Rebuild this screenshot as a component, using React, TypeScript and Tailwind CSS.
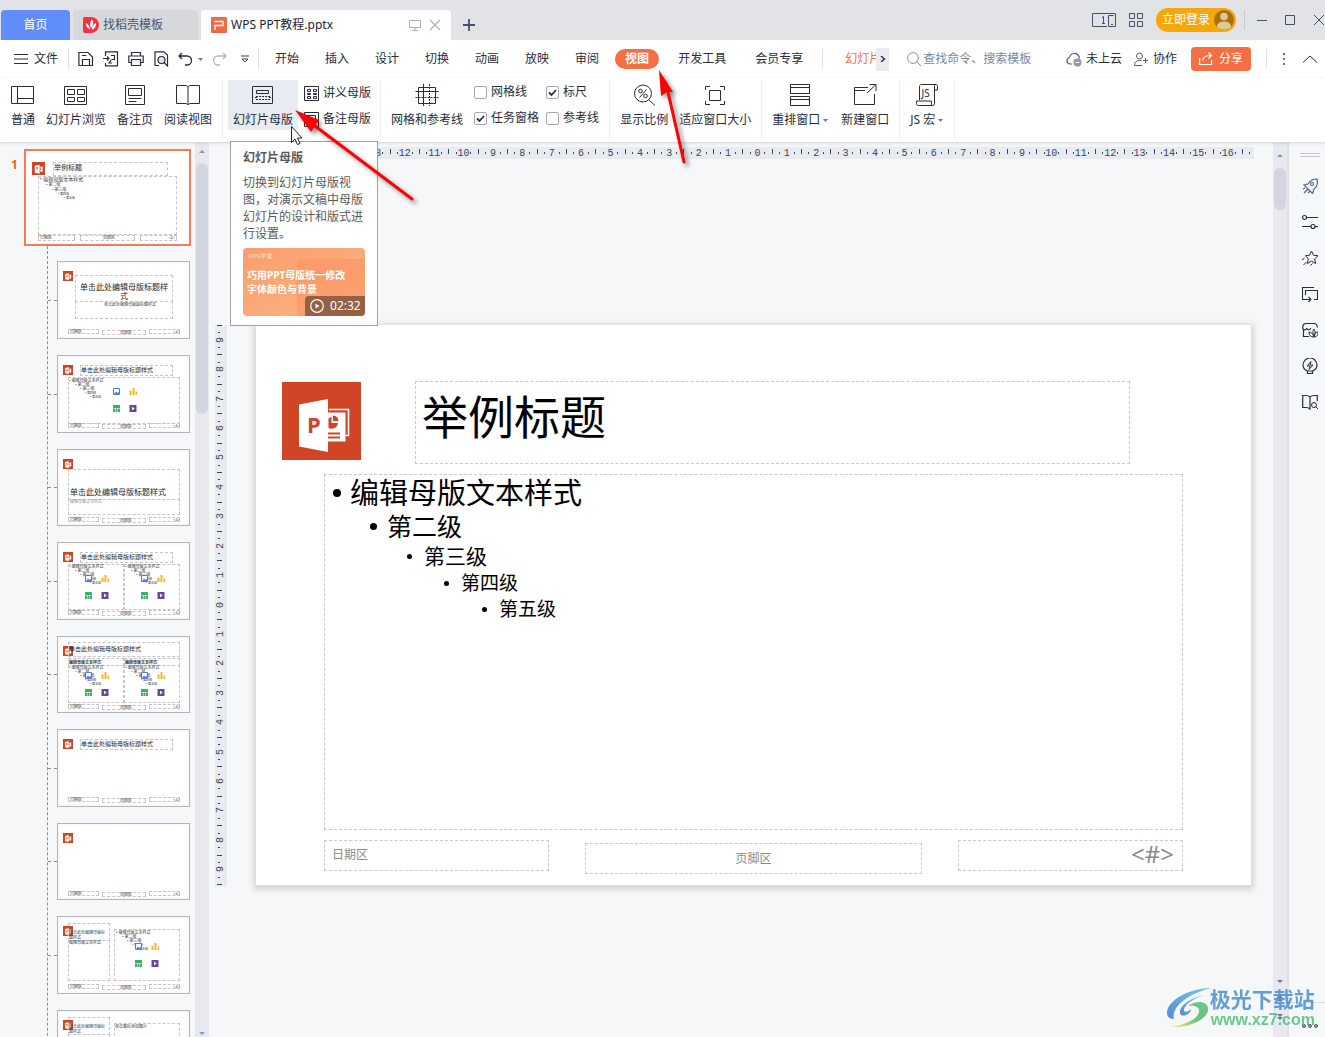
import React from "react";

type Kids = { children?: React.ReactNode };

/* ---------- icons ---------- */

function Ico({ children, size = 16, box = 16, className = "" }: Kids & { size?: number; box?: number; className?: string }) {
  return (
    <svg
      width={size}
      height={size}
      viewBox={`0 0 ${box} ${box}`}
      fill="none"
      stroke="currentColor"
      strokeWidth="1"
      className={`shrink-0 ${className}`}
      aria-hidden="true"
    >
      {children}
    </svg>
  );
}

const Caret = () => (
  <svg width="5" height="3" viewBox="0 0 5 3" className="shrink-0" aria-hidden="true">
    <path d="M0 0h5L2.5 3z" fill="#6b7a94" />
  </svg>
);

function OfficeLogo({ className = "" }: { className?: string }) {
  return (
    <svg viewBox="0 0 79 78" className={className} preserveAspectRatio="none" aria-hidden="true">
      <rect width="79" height="78" fill="#d04526" />
      <path d="M47 27.5H66.5V53.5H63.5" fill="none" stroke="#fff" strokeWidth="1.6" />
      <path d="M46 30.5H63.5V59.5H46z" fill="#fff" />
      <path d="M46.5 36.5a6 6 0 0 1 3-1.500V41h6.500a6.500 6.500 0 0 1-9.500 5z" fill="#d04526" />
      <path d="M51 33.500a6 6 0 0 1 5.500 5.500H51z" fill="#d04526" />
      <path d="M46 50.500h12v2H46zM46 54.500h12v2H46z" fill="#d04526" />
      <path d="M17 22.500 46 17v53L17 64.500z" fill="#fff" />
      <text x="25" y="51" fontFamily="Open Sans, Noto Sans, sans-serif" fontWeight="700" fontSize="22" fill="#d04526">
        P
      </text>
    </svg>
  );
}

/* ---------- title bar ---------- */

function TitleBar() {
  return (
    <header className="flex h-10 shrink-0 items-end bg-[#e2e3e7] text-[#44506a]">
      <nav className="flex h-[30px] items-stretch pl-px" aria-label="文档标签">
        <button className="w-[69px] rounded-t bg-[#608dfa] text-white">首页</button>
        <button className="ml-[3px] flex w-[125px] items-center rounded-t bg-[#d7d8dc] pl-[10px] text-[#4a566c]">
          <svg width="16" height="16" viewBox="0 0 16 16" aria-hidden="true">
            <path d="M0 2a2 2 0 0 1 2-2h6a8 8 0 1 1 0 16H2a2 2 0 0 1-2-2z" fill="#f7323d" />
            <path d="M9 2c2 3 1.500 6-1 9-1.500-3-1.200-6 1-9zM3 6c2 1 3.500 3 4 6-3-.6-4.200-3-4-6zM13 6c.4 3-1 6-4.500 6.500C9 9.500 10.500 7 13 6z" fill="#fff" />
          </svg>
          <span className="ml-1">找稻壳模板</span>
        </button>
        <div className="ml-[3px] flex w-[250px] items-center rounded-t bg-white pl-[10px] pr-[10px]">
          <svg width="16" height="16" viewBox="0 0 16 16" aria-hidden="true">
            <rect width="16" height="16" rx="1" fill="#ee6a41" />
            <path d="M4 13V8.500h8V4.500H3.500" fill="none" stroke="#fff" strokeWidth="1.300" />
          </svg>
          <span className="ml-1 text-[#1f2430]">WPS PPT教程.pptx</span>
          <Ico size={12} box={12} className="ml-auto text-[#a4b1c8]">
            <path d="M.5 1.500h11v7H.5zM6 8.500v3M3 11.500h6" />
          </Ico>
          <button aria-label="关闭标签" className="ml-2 text-[#a4b1c8]">
            <Ico size={12} box={12}>
              <path d="M1 1l10 10M11 1 1 11" strokeWidth="1.200" />
            </Ico>
          </button>
        </div>
        <button aria-label="新建标签" className="ml-3">
          <Ico size={12} box={12}>
            <path d="M6 0v12M0 6h12" strokeWidth="1.800" />
          </Ico>
        </button>
      </nav>
      <div className="ml-auto flex h-10 items-center">
        <button aria-label="窗口布局">
          <svg width="24" height="14" viewBox="0 0 24 14" fill="none" stroke="currentColor" aria-hidden="true">
            <path d="M15 13.500H.5V.5h23v13M10 4.500 11.500 3.500v7M10 10.500h3M23.500 13.500h-7v-11h5M19 11.500h2" />
          </svg>
        </button>
        <button aria-label="全部应用" className="ml-[13px]">
          <Ico size={14} box={14}>
            <path d="M.5.5h5v5h-5zM8.500.5h5v5h-5zM.5 8.500h5v5h-5zM8.500 8.500h5v5h-5z" />
          </Ico>
        </button>
        <button className="ml-[13px] flex h-6 w-20 items-center justify-between rounded-full bg-[#f5a80c] pl-[6px] pr-[2px] text-white">
          立即登录
          <svg width="20" height="20" viewBox="0 0 20 20" aria-hidden="true">
            <circle cx="10" cy="10" r="10" fill="#a97208" />
            <circle cx="10" cy="6.500" r="3.800" fill="#e0c79a" />
            <path d="M3 17c0-4 3-5.500 7-5.500s7 1.500 7 5.500a10 10 0 0 1-14 0z" fill="#e0c79a" />
          </svg>
        </button>
        <span className="ml-2 h-5 w-px bg-[#c8cad0]" />
        <button aria-label="最小化" className="ml-3">
          <Ico size={10} box={10}><path d="M0 5.500h10" /></Ico>
        </button>
        <button aria-label="最大化" className="ml-[18px]">
          <Ico size={10} box={10}><path d="M.5.5h9v9h-9z" /></Ico>
        </button>
        <button aria-label="关闭" className="ml-[18px]">
          <Ico size={12} box={12}><path d="M1 1l10 10M11 1 1 11" /></Ico>
        </button>
      </div>
    </header>
  );
}

/* ---------- menu row ---------- */

function PointerToView() {
  return (
    <svg width="100" height="130" viewBox="615 45 100 130" className="pointer-events-none absolute -top-1 left-0 z-40 drop-shadow-[3px_3px_2px_rgba(0,0,0,0.45)]" aria-hidden="true">
      <path d="M668 92 684 162" stroke="#fe0000" strokeWidth="3" strokeLinecap="round" />
      <path d="M659 70 673 92 667 92 661 96z" fill="#fe0000" />
    </svg>
  );
}

function MenuRow() {
  return (
    <div className="flex h-[38px] shrink-0 items-center bg-white text-[#262d3d]">
      <button className="flex items-center pl-[14px]">
        <Ico size={14} box={14}><path d="M0 2.500h14M0 7h14M0 11.500h14" /></Ico>
        <span className="ml-[6px]">文件</span>
      </button>
      <span className="ml-[10px] h-[22px] w-px bg-[#e0e2e8]" />
      <div className="ml-[9px] flex items-center gap-[9px]">
        <button aria-label="保存"><Ico><path d="M.9 1.500h9L14.500 6v8.500H.9zM4.500 14.500V8.500h7v6M4 4.500h4.500" strokeWidth="1.200" /></Ico></button>
        <button aria-label="输出为PDF"><Ico><path d="M2.500 5V.8h12v14h-12V12M0 7.500h6M4 5.500l2 2-2 2M8 4.500h3.500v4H9M8.500 8.500 6 12h3" strokeWidth="1.200" /></Ico></button>
        <button aria-label="打印"><Ico><path d="M3.500 5V1.500h9V5M3.500 11.500h-2.700V5h14.400v6.500h-2.700M3.500 8.500h9v6h-9z" strokeWidth="1.200" /></Ico></button>
        <button aria-label="打印预览"><Ico><path d="M6 14.500H2V.8h9L14.500 4v11M11 11.500l4 4" strokeWidth="1.200" /><circle cx="8.500" cy="9" r="3.500" fill="#dfe2e8" strokeWidth="1.200" /></Ico></button>
      </div>
      <button aria-label="撤销" className="ml-[9px]"><Ico size={14} box={14}><path d="M1 4h8a4.500 4.500 0 0 1 0 9H7M4 1 1 4l3 3" strokeWidth="1.300" /></Ico></button>
      <span className="ml-[6px]"><Caret /></span>
      <button aria-label="恢复" className="ml-[10px] text-[#b5b8bf]"><Ico size={14} box={14}><path d="M13 4H5a4.500 4.500 0 0 0 0 9h2M10 1l3 3-3 3" strokeWidth="1.300" /></Ico></button>
      <button aria-label="自定义快速访问" className="ml-[14px]"><Ico size={8} box={8}><path d="M0 1h8M1 4l3 3 3-3z" strokeWidth=".9" /></Ico></button>
      <span className="ml-[9px] h-[22px] w-px bg-[#e0e2e8]" />
      <nav className="ml-4 flex items-center" aria-label="功能区">
        <div className="flex items-center gap-[26px]">
          {["开始", "插入", "设计", "切换", "动画", "放映", "审阅"].map((t) => (
            <button key={t}>{t}</button>
          ))}
        </div>
        <div className="relative ml-4">
          <button className="block h-5 w-11 rounded-full bg-[#f66f43] font-bold text-white">视图</button>
          <PointerToView />
        </div>
        <button className="ml-[19px]">开发工具</button>
        <button className="ml-[29px]">会员专享</button>
        <span className="ml-[19px] h-5 w-px bg-[#e0e2e8]" />
        <button className="ml-[22px] w-[31px] overflow-hidden whitespace-nowrap text-left text-[#f66f43]">幻灯片</button>
        <button aria-label="更多选项卡" className="flex h-[23px] w-[13px] items-center justify-center bg-[#e8ebf0]">
          <Ico size={6} box={6}><path d="M1 0l3.500 3L1 6" strokeWidth="1.400" /></Ico>
        </button>
      </nav>
      <label className="ml-[18px] flex items-center text-[#8590a8]">
        <Ico size={14} box={14}><circle cx="6" cy="6" r="5.400" /><path d="M10 10l4 4" /></Ico>
        <input className="ml-[2px] w-[112px] bg-transparent text-xs outline-none placeholder:text-[#7c869c]" placeholder="查找命令、搜索模板" aria-label="查找命令" />
      </label>
      <div className="ml-auto flex items-center">
        <button className="flex items-center">
          <Ico className="text-[#55617a]"><path d="M6 13H4a3.300 3.300 0 0 1-.5-6.500A5 5 0 0 1 13 5.500l.5 2" strokeWidth="1.200" /><circle cx="11.500" cy="11.500" r="4" fill="#8f98ac" stroke="none" /><path d="M9.500 11.500h4" stroke="#fff" /></Ico>
          <span className="ml-1">未上云</span>
        </button>
        <button className="ml-3 flex items-center">
          <Ico size={14} box={14} className="text-[#55617a]"><circle cx="5.500" cy="4" r="3" /><path d="M8.500 13.500H.5c0-3.500 2-5 5-5h2M11.500 6v5M9 8.500h5" /></Ico>
          <span className="ml-[5px]">协作</span>
        </button>
        <button className="ml-[14px] flex h-6 w-[60px] items-center justify-center rounded bg-[#f66f43] text-white">
          <Ico size={14} box={14}><path d="M.6 6v6.500h12V8M3.500 8.500C4 5 7 3.500 12 3.500M9.500.5l3 3-3 3" strokeWidth="1.200" /></Ico>
          <span className="ml-[6px]">分享</span>
        </button>
        <span className="ml-[15px] h-5 w-px bg-[#e0e2e8]" />
        <button aria-label="更多" className="ml-4">
          <svg width="2" height="12" viewBox="0 0 2 12" aria-hidden="true"><path d="M0 0h2v2H0zM0 5h2v2H0zM0 10h2v2H0z" fill="#67728a" /></svg>
        </button>
        <button aria-label="收起功能区" className="ml-[18px] mr-2"><Ico size={14} box={14}><path d="M0 10.500 7 4l7 6.500" /></Ico></button>
      </div>
    </div>
  );
}

/* ---------- ribbon ---------- */

function Big({ label, caret, className = "", children }: Kids & { label: string; caret?: boolean; className?: string }) {
  return (
    <button className={`flex h-[50px] flex-col items-center pt-[3px] ${className}`}>
      <span className="flex h-6 items-center">
        <svg width="24" height="24" viewBox="0 0 24 24" fill="none" stroke="#262d3d" strokeWidth="1" aria-hidden="true">
          {children}
        </svg>
      </span>
      <span className="mt-[5px] flex items-center gap-[3px] whitespace-nowrap leading-4">
        {label}
        {caret && <Caret />}
      </span>
    </button>
  );
}

function Check({ label, on }: { label: string; on?: boolean }) {
  return (
    <label className="flex h-4 items-center gap-1 whitespace-nowrap">
      <span className="relative size-[13px]">
        <input type="checkbox" defaultChecked={on} className="peer absolute inset-0 size-[13px] appearance-none rounded-[2px] border border-[#a2a8b5] bg-white" />
        <svg viewBox="0 0 13 13" className="pointer-events-none absolute inset-0 hidden peer-checked:block" aria-hidden="true">
          <path d="M3 6.500 5.500 9 10 4" fill="none" stroke="#262d3d" strokeWidth="1.800" />
        </svg>
      </span>
      {label}
    </label>
  );
}

function Tip() {
  return (
    <div role="tooltip" className="absolute left-[2px] top-[61px] z-20 w-[148px] border border-[#a0a0a3] bg-white px-3 pb-[9px] pt-[7px] text-left text-[#5a5a5e]">
      <p className="font-bold leading-[17px]">幻灯片母版</p>
      <p className="mt-2 leading-[17px]">切换到幻灯片母版视图，对演示文稿中母版幻灯片的设计和版式进行设置。</p>
      <div className="relative mt-[6px] flex h-[68px] flex-col overflow-hidden rounded-sm bg-linear-to-br from-[#fa9f6b] to-[#fbb384] text-white">
        <span className="absolute left-[54px] top-[11px] h-[60px] w-[68px] rounded-tl bg-[#fb9462] opacity-60" />
        <span className="relative pl-[5px] pt-1 text-[6px] leading-2 opacity-60">WPS学堂</span>
        <span className="relative whitespace-nowrap pl-1 pt-2 text-[10px] font-bold leading-[14px]">
          巧用PPT母版统一修改
          <br />
          字体颜色与背景
        </span>
        <span className="absolute bottom-0 right-0 flex h-5 w-[60px] items-center gap-[6px] rounded-tl bg-[#966043] pl-[5px]">
          <svg width="14" height="14" viewBox="0 0 14 14" className="shrink-0" aria-hidden="true">
            <circle cx="7" cy="7" r="6.300" fill="none" stroke="#fff" strokeWidth="1.200" />
            <path d="M5.500 4.500v5L9.500 7z" fill="#fff" />
          </svg>
          02:32
        </span>
      </div>
    </div>
  );
}

function PointerToMaster() {
  return (
    <svg width="200" height="140" viewBox="228 80 200 140" className="pointer-events-none absolute left-0 top-0 z-40" aria-hidden="true">
      <path d="M291.500 126.500v16l3.500-3.500 2.500 5.500 2.500-1-2.500-5.500h4.500z" fill="#fff" stroke="#1f2430" />
      <g className="drop-shadow-[3px_3px_2px_rgba(0,0,0,0.45)]">
        <path d="M315 126 412 199" stroke="#fe0000" strokeWidth="3" strokeLinecap="round" />
        <path d="M295 110 319 120 315 126 311 132z" fill="#fe0000" />
      </g>
    </svg>
  );
}

const Sep = ({ className = "" }: { className?: string }) => <span className={`h-[60px] w-px shrink-0 bg-[#eceef2] ${className}`} />;

function Ribbon() {
  return (
    <div className="relative z-10 flex h-16 shrink-0 items-start bg-white pt-[2px] text-[#262d3d] shadow-[0_1px_3px_rgba(0,0,0,0.15)]">
      <div className="flex gap-[11px] pl-[11px]">
        <Big label="普通"><path d="M.5 3.500h22v17H.5zM6.500 3.500v17M6.500 15.500h16" /></Big>
        <Big label="幻灯片浏览"><path d="M.5 3.500h22v18H.5zM3.500 6.500h7v5h-7zM13.500 6.500h7v5h-7zM3.500 14.500h7v4h-7zM13.500 14.500h7v4h-7z" /></Big>
        <Big label="备注页"><path d="M2.500 2.500h19v19h-19zM5.500 5.500h13v7h-13zM5.500 15.500h13M5.500 18.500h8" /></Big>
        <Big label="阅读视图"><path d="M12 4c-.5-1-1.500-1.500-3-1.500H.5v18H9c1.500 0 2.500.5 3 1.500.5-1 1.500-1.500 3-1.500h8.500v-18H15c-1.500 0-2.500.5-3 1.500zM12 4v18" /></Big>
      </div>
      <Sep className="ml-[10px]" />
      <div className="relative ml-[5px]">
        <Big label="幻灯片母版" className="w-[70px] bg-[#e8ebf0]"><path d="M1.500 3.500h20v17h-20zM5.500 7.500h12v3h-12zM4 14.500h2M18 14.500h2" /><path d="M5 13.500h14M5 16.500h14" strokeDasharray="2 1" /></Big>
        <Tip />
        <PointerToMaster />
      </div>
      <div className="ml-[6px] flex flex-col gap-[10px] pt-[5px]">
        <button className="flex h-4 items-center gap-1"><Ico size={15} box={15}><path d="M.5.5h14v14H.5zM3.500 3.500h3v2h-3zM9.500 3.500h3v2h-3zM3.500 7.500h3v1h-3zM9.500 7.500h3v1h-3zM3.500 10.500h3v2h-3zM9.500 10.500h3v2h-3z" /></Ico>讲义母版</button>
        <button className="flex h-4 items-center gap-1"><Ico size={15} box={15}><path d="M.5.5h14v14H.5zM3.500 3.500h8v5h-8zM3 10.500h9M3 12.500h6" /></Ico>备注母版</button>
      </div>
      <Sep className="ml-[9px]" />
      <Big label="网格和参考线" className="ml-[10px]"><path d="M3.500 4.500h17v16h-17zM.5 8.500h23M8.500 1v22" /><path d="M14.500 1v22M.5 14.500h23" strokeDasharray="2 1" /></Big>
      <div className="ml-[11px] grid grid-cols-[auto_auto] gap-x-[7px] gap-y-[10px] pt-1">
        <Check label="网格线" />
        <Check label="标尺" on />
        <Check label="任务窗格" on />
        <Check label="参考线" />
      </div>
      <Sep className="ml-[10px]" />
      <Big label="显示比例" className="ml-[10px]"><circle cx="11" cy="10.500" r="8.500" /><path d="M17 17l6 5.500M14.500 6.500l-7 8" /><circle cx="8.500" cy="8" r="1.800" /><circle cx="13.500" cy="13" r="1.800" /></Big>
      <Big label="适应窗口大小" className="ml-[11px]"><path d="M6.500 7.500h11v10h-11zM2.500 7V3.500H7M17 3.500h4.500V7M21.500 18v3.500H17M7 21.500H2.500V18" /></Big>
      <Sep className="ml-[10px]" />
      <Big label="重排窗口" caret className="ml-[10px]"><path d="M2.500 10.500v-9h19v9zM2.500 4.500h19M2.500 22.500v-9h19v9zM2.500 16.500h19" /></Big>
      <Big label="新建窗口" className="ml-[13px]"><path d="M15 4.500H1.500v17h20V11M1.500 7.500H12M14 10l8.500-8M16.500 1.500h6.500V8" /></Big>
      <Sep className="ml-[10px]" />
      <Big label="JS 宏" caret className="ml-[10px]">
        <path d="M4.500 17V3.500c0-1.200.8-2 2-2h14.500c1.300 0 1.500 1 1.500 2V7h-3M19.500 7V3.500c0-1 .4-2 1.500-2M19.500 7v13.500c0 1.200-.8 2-2 2H3.500c-1.500 0-2-.8-2-2V18h15v2.500c0 1.200.3 2 1.500 2" />
        <text x="6.500" y="14" fontSize="10" fontFamily="Noto Sans, sans-serif" fill="#262d3d" stroke="none">JS</text>
      </Big>
      <Sep className="ml-[11px]" />
    </div>
  );
}

/* ---------- thumbnails ---------- */

const FRAME = "absolute border border-dashed border-[#c6c6c8]";
const TINY = "absolute whitespace-nowrap text-[4px] leading-[5px] text-[#3b3b3f]";

const Ph = ({ className, children }: Kids & { className: string }) => <div className={`${FRAME} ${className}`}>{children}</div>;

function Outline({ className }: { className: string }) {
  return (
    <div className={`${TINY} ${className}`}>
      <p>• 编辑母版文本样式</p>
      <p className="pl-[6px] leading-[4px]">• 第二级</p>
      <p className="pl-[11px] leading-[4px]">• 第三级</p>
      <p className="pl-[16px] text-[3px] leading-[4px]">• 第四级</p>
      <p className="pl-[21px] text-[3px] leading-[4px]">• 第五级</p>
    </div>
  );
}

function Media({ className }: { className: string }) {
  return (
    <svg width="26" height="26" viewBox="0 0 26 26" className={`absolute ${className}`} aria-hidden="true">
      <path d="M1.500 1.500h6v6h-6z" fill="#fff" stroke="#4a82dd" />
      <path d="M2 7l2-2.500L5.500 6 7 4.500V7z" fill="#4a82dd" />
      <path d="M17.500 3.500h2V8h-2zM20.500 1h2v7h-2zM23.500 4.500h1.500V8h-1.500z" fill="#f7b52c" />
      <path d="M1 18h7v3H1zM1 21.500h2V25H1zM3.500 21.500h2V25h-2zM6 21.500h2V25H6z" fill="#3fae6a" />
      <path d="M17.500 18h7v7h-7z" fill="#67489c" />
      <path d="M20 19.800v3.400l2.800-1.700z" fill="#fff" />
    </svg>
  );
}

function ThumbFooter() {
  return (
    <>
      <Ph className="left-[10px] top-[67px] h-[5px] w-[31px]" />
      <Ph className="left-[44px] top-[68px] h-[5px] w-[44px]" />
      <Ph className="left-[91px] top-[67px] h-[5px] w-[31px]" />
      <span className={`${TINY} left-[12px] top-[67px] text-[3px]`}>日期区</span>
      <span className={`${TINY} left-[62px] top-[68px] text-[3px]`}>页脚区</span>
      <span className={`${TINY} left-[115px] top-[67px] text-[3px]`}>&lt;#&gt;</span>
    </>
  );
}

function Thumb({ name, short, footer = true, children }: Kids & { name: string; short?: boolean; footer?: boolean }) {
  return (
    <li className="flex items-center">
      <span className="w-[9px] border-t border-dashed border-[#8f8f93]" />
      <button aria-label={name} className={`relative w-[133px] overflow-hidden border border-[#b4b5b9] bg-white text-left outline-2 -outline-offset-3 outline-[#f9f9fa] ${short ? "h-[77px]" : "h-[78px]"}`}>
        <OfficeLogo className="absolute left-[5px] top-[9px] size-[10px]" />
        {children}
        {footer && <ThumbFooter />}
      </button>
    </li>
  );
}

const TITLE = "单击此处编辑母版标题样式";

function TitleRow() {
  return (
    <Ph className="left-[22px] top-[9px] h-[11px] w-[93px]">
      <span className="absolute left-0 top-0 whitespace-nowrap text-[6px] leading-[9px] text-[#262629]">{TITLE}</span>
    </Ph>
  );
}

function Thumbnails() {
  return (
    <aside className="flex w-[209px] shrink-0" aria-label="母版缩略图">
      <div className="flex-1 overflow-hidden pt-[7px]">
        <div className="flex items-start">
          <span className="w-6 shrink-0 pl-[11px] pt-2 font-bold leading-4 text-[#dd6b20]">1</span>
          <button aria-label="母版" className="relative h-[97px] w-[167px] border-2 border-[#fb7956] bg-white">
            <OfficeLogo className="absolute left-[6px] top-[11px] size-[13px]" />
            <Ph className="left-[27px] top-[11px] h-[14px] w-[115px]" />
            <span className="absolute left-[28px] top-[12px] text-[7px] leading-[10px] text-[#262629]">举例标题</span>
            <Ph className="left-[12px] top-[25px] h-[59px] w-[139px]" />
            <div className={`${TINY} left-[14px] top-[26px] text-left`}>
              <p className="text-[5px]">• 编辑母版文本样式</p>
              <p className="pl-[6px]">• 第二级</p>
              <p className="pl-[12px]">• 第三级</p>
              <p className="pl-[18px] text-[3px] leading-[4px]">• 第四级</p>
              <p className="pl-[24px] text-[3px] leading-[4px]">• 第五级</p>
            </div>
            <Ph className="left-[12px] top-[84px] h-[6px] w-[37px]" />
            <Ph className="left-[54px] top-[84px] h-[6px] w-[55px]" />
            <Ph className="left-[114px] top-[84px] h-[6px] w-[37px]" />
            <span className={`${TINY} left-[14px] top-[84px] text-[3px]`}>日期区</span>
            <span className={`${TINY} left-[77px] top-[84px] text-[3px]`}>页脚区</span>
            <span className={`${TINY} left-[142px] top-[84px]`}>&lt;#&gt;</span>
          </button>
        </div>
        <ul className="ml-[47px] flex h-[900px] flex-col gap-4 border-l border-dashed border-[#8f8f93] pt-[15px] text-left">
          <Thumb name="标题幻灯片">
            <Ph className="left-[17px] top-[13px] h-[27px] w-[98px]" />
            <span className="absolute left-[21px] top-[20px] w-[90px] text-center text-[8px] leading-[9px] text-[#262629]">{TITLE}</span>
            <Ph className="left-[17px] top-[39px] h-[18px] w-[98px]" />
            <span className={`${TINY} left-[46px] top-[40px] text-[3px]`}>单击此处编辑母版副标题样式</span>
          </Thumb>
          <Thumb name="标题和内容">
            <TitleRow />
            <Ph className="left-[10px] top-[21px] h-[47px] w-[112px]" />
            <Outline className="left-[11px] top-[22px]" />
            <Media className="left-[54px] top-[31px]" />
          </Thumb>
          <Thumb name="节标题" short>
            <Ph className="left-[10px] top-[19px] h-[31px] w-[112px]" />
            <span className="absolute left-[12px] top-[37px] whitespace-nowrap text-[8px] leading-[10px] text-[#262629]">{TITLE}</span>
            <Ph className="left-[10px] top-[49px] h-[16px] w-[112px]" />
            <span className={`${TINY} left-[12px] top-[49px] text-[3px] text-[#909094]`}>编辑母版文本样式</span>
          </Thumb>
          <Thumb name="两栏内容">
            <TitleRow />
            <Ph className="left-[10px] top-[21px] h-[46px] w-[56px]" />
            <Ph className="left-[66px] top-[21px] h-[46px] w-[56px]" />
            <Outline className="left-[11px] top-[21px]" />
            <Outline className="left-[67px] top-[21px]" />
            <Media className="left-[26px] top-[31px]" />
            <Media className="left-[82px] top-[31px]" />
          </Thumb>
          <Thumb name="比较" short>
            <Ph className="left-[10px] top-[5px] h-[15px] w-[112px]" />
            <span className="absolute left-[11px] top-[8px] whitespace-nowrap text-[6px] leading-[9px] text-[#262629]">{TITLE}</span>
            <Ph className="left-[10px] top-[21px] h-[8px] w-[56px]" />
            <Ph className="left-[66px] top-[21px] h-[8px] w-[56px]" />
            <span className={`${TINY} left-[11px] top-[23px] text-[3px] font-bold`}>编辑母版文本样式</span>
            <span className={`${TINY} left-[67px] top-[23px] text-[3px] font-bold`}>编辑母版文本样式</span>
            <Ph className="left-[10px] top-[28px] h-[38px] w-[56px]" />
            <Ph className="left-[66px] top-[28px] h-[38px] w-[56px]" />
            <Outline className="left-[11px] top-[28px]" />
            <Outline className="left-[67px] top-[28px]" />
            <Media className="left-[26px] top-[34px]" />
            <Media className="left-[82px] top-[34px]" />
          </Thumb>
          <Thumb name="仅标题">
            <TitleRow />
          </Thumb>
          <Thumb name="空白" short />
          <Thumb name="内容与标题">
            <Ph className="left-[10px] top-[6px] h-[18px] w-[42px]" />
            <span className={`${TINY} left-[11px] top-[13px]`}>单击此处编辑母版标<br />题样式</span>
            <Ph className="left-[10px] top-[23px] h-[41px] w-[42px]" />
            <span className={`${TINY} left-[11px] top-[23px] text-[3px]`}>编辑母版文本样式</span>
            <Ph className="left-[56px] top-[12px] h-[52px] w-[66px]" />
            <Outline className="left-[58px] top-[13px]" />
            <Media className="left-[76px] top-[25px]" />
          </Thumb>
          <Thumb name="图片与标题" footer={false}>
            <Ph className="left-[10px] top-[6px] h-[18px] w-[42px]" />
            <span className={`${TINY} left-[11px] top-[13px]`}>单击此处编辑母版标<br />题样式</span>
            <Ph className="left-[10px] top-[23px] h-[41px] w-[42px]" />
            <Ph className="left-[56px] top-[12px] h-[52px] w-[66px]" />
            <span className={`${TINY} left-[57px] top-[13px]`}>单击图标添加图片</span>
          </Thumb>
        </ul>
      </div>
      <div className="flex w-[14px] flex-col items-center bg-[#e8e9ef]">
        <svg width="6" height="3" viewBox="0 0 6 3" className="mt-2 shrink-0" aria-hidden="true"><path d="M0 3h6L3 0z" fill="#8b97b0" /></svg>
        <div className="mt-[10px] h-[251px] w-3 rounded-full bg-[#d3d6de]" />
        <svg width="6" height="3" viewBox="0 0 6 3" className="mb-[2px] mt-auto shrink-0" aria-hidden="true"><path d="M0 0h6L3 3z" fill="#8b97b0" /></svg>
      </div>
    </aside>
  );
}

/* ---------- rulers ---------- */

const range = (n: number) => Array.from({ length: n * 2 + 1 }, (_, i) => Math.abs(i - n));

function HorizontalRuler() {
  return (
    <div className="-mr-[3px] flex h-3 bg-[#e8ebf0] pl-4 font-['Liberation_Mono'] text-[10px] leading-[13px] text-[#3c465c]">
      {range(16).map((n, i) => (
        <div key={i} className="grid min-w-0 flex-1 grid-cols-4">
          <span className="mt-[2px] h-[5px] w-px bg-current" />
          <span className="mt-[5px] h-[2px] w-px bg-current" />
          <span className="flex w-px justify-center">{n}</span>
          <span className="mt-[5px] h-[2px] w-px bg-current" />
        </div>
      ))}
      <div className="grid w-3 shrink-0 grid-cols-[7px_5px]">
        <span className="mt-[2px] h-[5px] w-px bg-current" />
        <span className="mt-[5px] h-[2px] w-px bg-current" />
      </div>
    </div>
  );
}

function VerticalRuler() {
  return (
    <div className="flex w-3 flex-col bg-[#e8ebf0] pb-[2px] font-['Liberation_Mono'] text-[10px] leading-3 text-[#3c465c]">
      {range(9).map((n, i) => (
        <div key={i} className="grid min-h-0 flex-1 grid-rows-4">
          <span className="ml-[2px] h-px w-[5px] bg-current" />
          <span className="ml-[3px] h-px w-[2px] bg-current" />
          <span className="flex h-0 items-center justify-center"><span className="-rotate-90">{n}</span></span>
          <span className="ml-[3px] h-px w-[2px] bg-current" />
        </div>
      ))}
      <span className="ml-[2px] h-px w-[5px] bg-current" />
    </div>
  );
}

/* ---------- slide ---------- */

const BOX = "border border-dashed border-[#c9c9cb]";

function Bullet({ className, dot, children }: Kids & { className: string; dot: string }) {
  return (
    <li className={`flex items-center ${className}`}>
      <span className={`shrink-0 rounded-full bg-black ${dot}`} />
      {children}
    </li>
  );
}

function Slide() {
  return (
    <article className="flex h-[560px] flex-col bg-white pt-14 shadow-[0_2px_6px_3px_rgba(0,0,0,0.13)]">
      <div className="flex pl-[26px] pr-[121px]">
        <OfficeLogo className="mt-px h-[78px] w-[79px] shrink-0" />
        <h1 className={`ml-[54px] h-[83px] flex-1 pl-[6px] text-[46px] leading-[68px] text-black ${BOX}`}>举例标题</h1>
      </div>
      <ul className={`mx-[68px] mt-[10px] h-[356px] text-black ${BOX}`}>
        <Bullet className="gap-[9px] pl-2 text-[29px] leading-[36px]" dot="size-2">编辑母版文本样式</Bullet>
        <Bullet className="gap-[10px] pl-[45px] text-[25px] leading-[31px]" dot="size-[7px]">第二级</Bullet>
        <Bullet className="gap-[12px] pl-[82px] text-[21px] leading-[28px]" dot="size-[5px]">第三级</Bullet>
        <Bullet className="gap-[12px] pl-[119px] text-[19px] leading-[26px]" dot="size-[5px]">第四级</Bullet>
        <Bullet className="gap-[12px] pl-[157px] text-[19px] leading-[26px]" dot="size-[5px]">第五级</Bullet>
      </ul>
      <footer className="mx-[68px] mt-[10px] flex justify-between text-[#8a8a8d]">
        <div className={`h-[31px] w-[225px] pl-[7px] leading-[28px] ${BOX}`}>日期区</div>
        <div className={`mt-[3px] h-[31px] w-[337px] text-center leading-[29px] ${BOX}`}>页脚区</div>
        <div className={`h-[31px] w-[225px] pr-[8px] text-right font-['Noto_Sans'] text-[24px] leading-[25px] ${BOX}`}>&lt;#&gt;</div>
      </footer>
    </article>
  );
}

/* ---------- right side ---------- */

function SidePane() {
  const tools: [string, React.ReactNode][] = [
    ["动画助手", <g stroke="#566480" strokeWidth="1.200"><path d="M15 1c-4 0-7 1.500-9 5l-4 1 2.500 2.500L8 13l2.500 2.500L12 11c3-2 4-6 3-10zM1 11l2-1M2 15l4-4M6 15l1.500-1.500" /><circle cx="10" cy="6" r="1.500" /></g>],
    ["设置", <g strokeWidth="1.200"><path d="M5 3.500h11M0 12.500h9M13 12.500h3" /><circle cx="2.500" cy="3.500" r="2" /><circle cx="11" cy="12.500" r="2" /></g>],
    ["动画", <path d="M9.500 1l2 4.200 4.500.5-3.300 3.200.9 4.600-4.100-2.300-4.100 2.300.9-4.600L3.500 5.700 7.500 5.200zM0 10l2.500-2M1.500 15l3-3M8.500 15.500l2-2" />],
    ["切换", <path d="M12 1.500H.5v12H8M6.500 11l2.500 2.500L6.500 16M3.500 9V4.500h12v9H12" strokeWidth="1.100" />],
    ["素材", <><path d="M1.500 8v6.500H7M.7 5.500C.7 3 2 1.500 4 1.500h8c2 0 3.300 1.500 3.300 4M.7 5.500c0 3 3.500 3 4 .5.5 2.500 3.500 2.500 4 0" strokeWidth="1.200" /><path d="M12 7c1.500 2 1.500 4 0 8-1.500-4-1.500-6 0-8zM7 10c2.500 0 4 2 5 5-3.500 0-5-1.500-5-5zM16 10c-2.500 0-4 2-4.500 5 3.500 0 4.500-1.500 4.500-5z" /></>],
    ["技巧", <><path d="M5.500 13v2.500h5V13C13 12 15 10 15 7A7 7 0 0 0 1 7c0 3 2 5 4.500 6zM5.500 13h5" strokeWidth="1.200" /><path d="M9 3.500 5 8h3l-1 3.500L11 7H8z" /></>],
    ["文档检索", <><path d="M8 3c-1-1-2-1.500-4-1.500H.7v12H4c2 0 3 .3 4 1.500V3zc1-1 2-1.500 4-1.500h3.300V7" strokeWidth="1.200" /><circle cx="12" cy="11" r="2.500" /><path d="M14 13l2 2" /></>],
  ];
  return (
    <aside className="flex w-9 shrink-0 flex-col items-center text-[#262d3d]" aria-label="任务窗格">
      <span className="ml-[6px] mt-[11px] h-1 w-5 shrink-0 border-y border-[#c6c8cc]" />
      <div className="mt-[21px] flex flex-col gap-5 pl-[6px]">
        {tools.map(([name, art]) => (
          <button key={name} aria-label={name} title={name}><Ico>{art}</Ico></button>
        ))}
      </div>
      <button aria-label="更多工具" className="mt-auto w-full border-t border-[#dcdee4] pb-[9px] pl-[13px] pt-[21px]">
        <svg width="16" height="4" viewBox="0 0 16 4" fill="none" stroke="#262d3d" strokeWidth="1" aria-hidden="true">
          <circle cx="2" cy="2" r="1.400" /><circle cx="8" cy="2" r="1.400" /><circle cx="14" cy="2" r="1.400" />
        </svg>
      </button>
    </aside>
  );
}

function Watermark() {
  return (
    <div className="pointer-events-none absolute bottom-[6px] right-[10px] z-30 flex h-[46px] items-center opacity-85">
      <svg width="46" height="42" viewBox="0 0 46 42" aria-hidden="true">
        <defs>
          <linearGradient id="swirlBlue" x1="0" y1="1" x2="1" y2="0"><stop offset="0" stopColor="#3f78cc" /><stop offset="1" stopColor="#5cc4f2" /></linearGradient>
          <linearGradient id="swirlGreen" x1="0" y1="1" x2="1" y2="0"><stop offset="0" stopColor="#f2e64a" /><stop offset=".5" stopColor="#56b863" /><stop offset="1" stopColor="#4fc37e" /></linearGradient>
        </defs>
        <path d="M46 1C22 1 1 14 1 26c0 4 3 6 7 6-3-11 12-25 38-31z" fill="url(#swirlBlue)" />
        <path d="M38 8C24 11 13 19 14 26c1 5 11 2 11-4-3 3-7 4-7 1 0-5 10-12 20-15z" fill="url(#swirlBlue)" />
        <path d="M22 19c8-6 19-5 20 2 2 9-16 20-37 19 14-2 27-8 28-15 1-5-4-7-11-6z" fill="url(#swirlGreen)" />
      </svg>
      <div className="-ml-[2px] whitespace-nowrap">
        <p className="text-[21px] font-bold leading-[22px] text-[#4a8fd2]">极光下载站</p>
        <p className="pl-px font-['Liberation_Sans'] text-[16px] font-bold leading-[19px] text-[#55c07c]">www.xz7.com</p>
      </div>
    </div>
  );
}

export default function App() {
  return (
    <div className="relative flex h-screen flex-col overflow-hidden bg-[#f5f7f9] font-['Noto_Sans','Noto_Sans_CJK_SC',sans-serif] text-xs">
      <TitleBar />
      <MenuRow />
      <Ribbon />
      <div className="flex min-h-0 flex-1">
        <Thumbnails />
        <main className="grid min-w-0 flex-1 grid-cols-[12px_1fr] grid-rows-[12px_auto] content-start gap-x-[29px] pl-[6px] pr-[22px] pt-[5px]">
          <div className="col-start-2 min-w-0"><HorizontalRuler /></div>
          <div className="mt-[166px] flex h-[562px]"><VerticalRuler /></div>
          <div className="mt-[166px] min-w-0"><Slide /></div>
        </main>
        <div className="flex w-4 shrink-0 flex-col items-center border-r-2 border-[#e0e1e8] bg-[#e8e9ef]">
          <svg width="6" height="3" viewBox="0 0 6 3" className="mt-3 shrink-0" aria-hidden="true"><path d="M0 3h6L3 0z" fill="#8b97b0" /></svg>
          <div className="mt-[11px] h-[42px] w-3 rounded-full bg-[#d3d6de]" />
          <svg width="6" height="40" viewBox="0 0 6 40" className="mb-[17px] mt-auto shrink-0" aria-hidden="true"><path d="M0 0h6L3 3zM0 18l3-3 3 3zM0 21l3-3 3 3zM0 34h6l-3 3zM0 37h6l-3 3z" fill="#6b7a98" /></svg>
        </div>
        <SidePane />
      </div>
      <Watermark />
    </div>
  );
}
